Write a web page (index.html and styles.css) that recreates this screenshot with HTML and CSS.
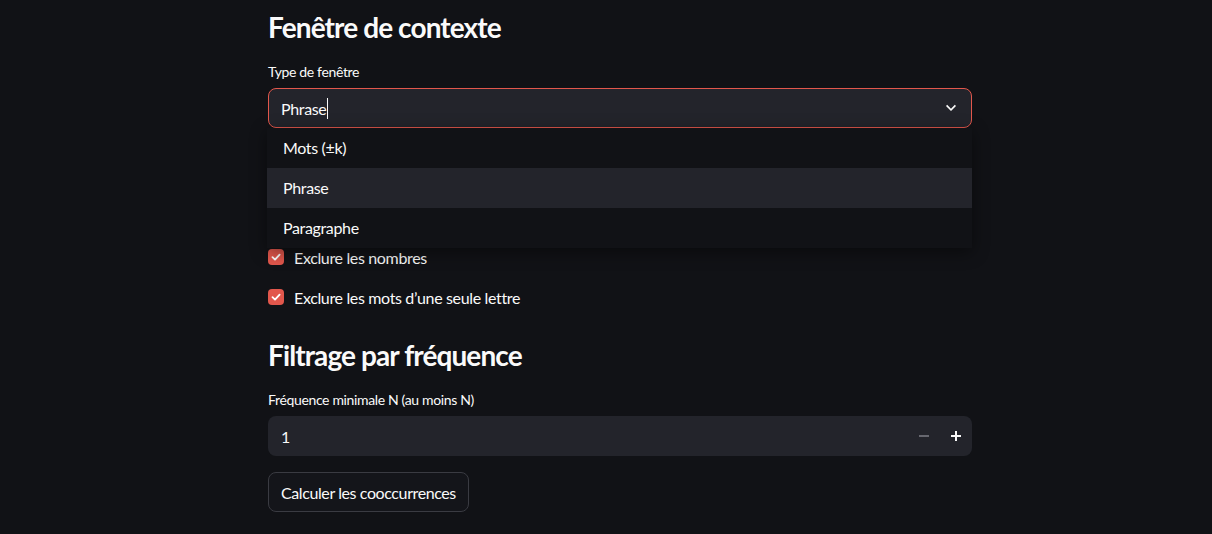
FILE: index.html
```html
<!DOCTYPE html>
<html>
	<head>
		<meta charset="UTF-8">
		<title>Cooccurrences</title>
		<link rel="stylesheet" href="styles.css">
	</head>
	<body>
		<main class="block">
			<h3 class="heading">Fenêtre de contexte</h3>

			<div class="field">
				<label class="label">Type de fenêtre</label>
				<div class="select-wrap">
					<div class="select focused">
						<span class="value">Phrase</span><span class="caret"></span>
						<svg class="chevron" width="20" height="20" viewBox="0 0 24 24">
							<path d="M7.4 8.2 12 12.8l4.6-4.6L18 9.6l-6 6-6-6z" fill="#fafafa"/>
						</svg>
					</div>
					<!-- liste ouverte, posée au-dessus du contenu -->
					<ul class="menu">
						<li>Mots (±k)</li>
						<li class="active">Phrase</li>
						<li>Paragraphe</li>
					</ul>
				</div>
			</div>

			<div class="hidden-field"></div>

			<label class="check">
				<span class="box"><svg width="12" height="12" viewBox="0 0 12 12"><path d="M2.5 6.2 5 8.6 9.6 3.6" stroke="#fff" stroke-width="1.8" fill="none" stroke-linecap="round" stroke-linejoin="round"/></svg></span>
				Exclure les nombres
			</label>
			<label class="check">
				<span class="box"><svg width="12" height="12" viewBox="0 0 12 12"><path d="M2.5 6.2 5 8.6 9.6 3.6" stroke="#fff" stroke-width="1.8" fill="none" stroke-linecap="round" stroke-linejoin="round"/></svg></span>
				Exclure les mots d’une seule lettre
			</label>

			<h3 class="heading second">Filtrage par fréquence</h3>

			<div class="field">
				<label class="label">Fréquence minimale N (au moins N)</label>
				<div class="number">
					<span class="value">1</span>
					<span class="step minus">
						<svg width="12" height="12" viewBox="0 0 12 12"><rect x="1" y="5.25" width="10" height="1.5" fill="#7d7e86"/></svg>
					</span>
					<span class="step plus">
						<svg width="12" height="12" viewBox="0 0 12 12"><rect x="1" y="5" width="10" height="2" fill="#fafafa"/><rect x="5" y="1" width="2" height="10" fill="#fafafa"/></svg>
					</span>
				</div>
			</div>

			<div><button class="btn">Calculer les cooccurrences</button></div>
		</main>
	</body>
</html>
```

FILE: styles.css
```css
*{margin: 0;padding: 0;box-sizing: border-box;}
body{
	background: #111216;
	color: #fafafa;
	font-family: "Source Sans Pro", Lato, "Liberation Sans", sans-serif;
	font-size: 16px;
	letter-spacing: -0.35px;
}
.block{
	width: 704px;
	margin-left: 268px;
	padding-top: 10px;
	display: flex;
	flex-direction: column;
	gap: 16px;
}
.heading{
	font-size: 28px;
	font-weight: 700;
	line-height: 34px;
	letter-spacing: -0.9px;
}
.heading.second{
	margin-top: 13px;
}
.label{
	display: block;
	font-size: 14px;
	line-height: 24px;
	margin-bottom: 4px;
	letter-spacing: -0.35px;
}
.select-wrap{
	position: relative;
}
.select{
	height: 40px;
	background: #23242b;
	border: 1px solid #23242b;
	border-radius: 8px;
	display: flex;
	align-items: center;
	padding-left: 12px;
}
.select.focused{
	border-color: #e2574c;
}
.caret{
	width: 1px;
	height: 21px;
	background: #fafafa;
	margin-left: 1px;
}
.chevron{
	margin-left: auto;
	margin-right: 10px;
}
.menu{
	position: absolute;
	top: 40px;
	left: -1px;
	right: 0;
	list-style: none;
	background: #111216;
	box-shadow: 0 4px 16px rgba(0,0,0,0.45);
	z-index: 2;
}
.menu li{
	height: 40px;
	line-height: 40px;
	padding-left: 16px;
}
.menu li.active{
	background: #23242b;
}
.hidden-field{
	height: 85px;
}
.check{
	display: flex;
	align-items: center;
	height: 24px;
	gap: 10px;
}
.box{
	width: 16px;
	height: 16px;
	border-radius: 4px;
	background: #e2574c;
	display: flex;
	align-items: center;
	justify-content: center;
}
.number{
	height: 40px;
	background: #23242b;
	border-radius: 8px;
	display: flex;
	align-items: center;
	padding-left: 13px;
}
.number .value{
	flex: 1;
}
.step{
	width: 32px;
	height: 40px;
	display: flex;
	align-items: center;
	justify-content: center;
}
.btn{
	height: 40px;
	padding: 0 12px;
	background: #14151a;
	color: #fafafa;
	border: 1px solid #3a3b42;
	border-radius: 8px;
	font: inherit;
	letter-spacing: -0.4px;
}
```
